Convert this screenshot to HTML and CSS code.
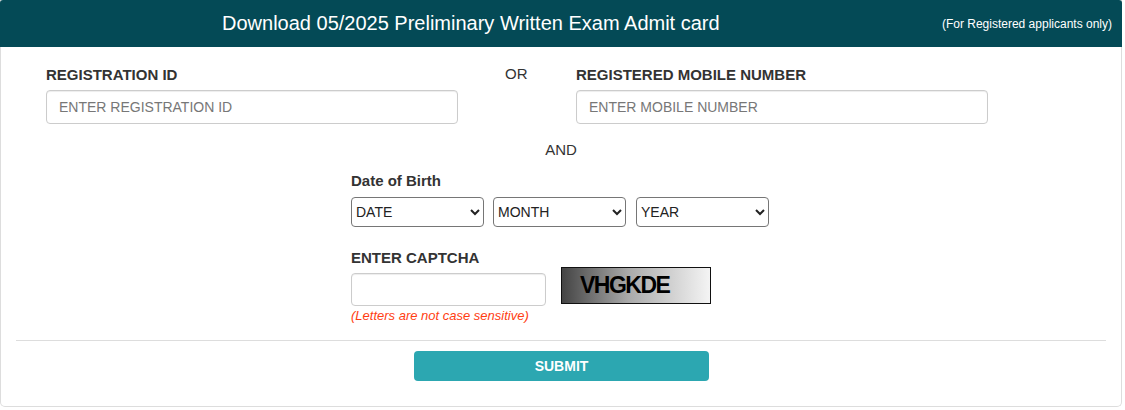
FILE: index.html
```html
<!DOCTYPE html>
<html>
<head>
<meta charset="utf-8">
<link rel="stylesheet" href="styles.css">
</head>
<body>
<div class="card">
  <div class="card-head">
    <div class="head-title">Download 05/2025 Preliminary Written Exam Admit card</div>
    <div class="head-note">(For Registered applicants only)</div>
  </div>
  <div class="card-body">
    <div class="id-row">
      <div class="field">
        <label class="lbl">REGISTRATION ID</label>
        <input class="txt" type="text" placeholder="ENTER REGISTRATION ID">
      </div>
      <div class="or">OR</div>
      <div class="field">
        <label class="lbl">REGISTERED MOBILE NUMBER</label>
        <input class="txt" type="text" placeholder="ENTER MOBILE NUMBER">
      </div>
    </div>
    <div class="and">AND</div>
    <div class="center-block">
      <label class="lbl lbl-dob">Date of Birth</label>
      <div class="dob-row">
        <select class="sel"><option>DATE</option></select>
        <select class="sel"><option>MONTH</option></select>
        <select class="sel"><option>YEAR</option></select>
      </div>
      <label class="lbl lbl-cap">ENTER CAPTCHA</label>
      <div class="cap-row">
        <div class="cap-col">
          <input class="txt cap-input" type="text">
          <div class="hint">(Letters are not case sensitive)</div>
        </div>
        <div class="cap-img"><span>VHGKDE</span></div>
      </div>
    </div>
    <hr class="rule">
    <div class="btn-row">
      <button class="submit">SUBMIT</button>
    </div>
  </div>
</div>
</body>
</html>
```

FILE: styles.css
```css
* { box-sizing: border-box; }
html, body { margin: 0; padding: 0; background: #fff; }
body {
  font-family: "Liberation Sans", Arial, sans-serif;
  font-size: 14px;
  color: #333;
  width: 1125px;
  height: 410px;
  overflow: hidden;
}
.card {
  width: 1122px;
  height: 407px;
  border: 1px solid #ddd;
  border-top: none;
  border-radius: 0 0 5px 5px;
}
.card-head {
  background: #044a56;
  color: #fff;
  height: 47px;
  margin: 0 -1px;
  display: flex;
  align-items: center;
  border-radius: 3px 3px 0 0;
}
.head-title {
  font-size: 20px;
  margin-left: 222px;
}
.head-note {
  font-size: 12px;
  margin-left: auto;
  margin-right: 10px;
}
.card-body {
  padding: 18px 15px 0 15px;
}
.id-row {
  display: flex;
  align-items: flex-start;
  padding-left: 30px;
}
.field { width: 412px; display: flex; flex-direction: column; }
.lbl {
  font-weight: bold;
  font-size: 15px;
  color: #333;
  display: block;
  line-height: 20px;
}
.id-row .lbl { margin-bottom: 5px; }
.or {
  width: 118px;
  padding-left: 47px;
  font-size: 15px;
  line-height: 18px;
}
.txt {
  height: 34px;
  border: 1px solid #ccc;
  border-radius: 4px;
  padding: 6px 12px;
  font-family: "Liberation Sans", Arial, sans-serif;
  font-size: 14px;
  color: #555;
  outline: none;
  box-shadow: inset 0 1px 1px rgba(0,0,0,.075);
  width: 100%;
}
.txt::placeholder { color: #777; }
.and {
  text-align: center;
  font-size: 15px;
  margin-top: 17px;
  line-height: 18px;
}
.center-block {
  margin-left: 335px;
  width: 460px;
  margin-top: 12px;
}
.lbl-dob { margin-bottom: 6px; }
.dob-row {
  display: flex;
}
.sel {
  flex: 0 0 133px;
  width: 133px;
  height: 30px;
  margin-right: 9px;
  border: 1px solid #767676;
  border-radius: 4px;
  background: #fff;
  font-family: "Liberation Sans", Arial, sans-serif;
  font-size: 14px;
  color: #222;
  padding: 0;
}
.sel:last-child { margin-left: 1px; }
.lbl-cap { margin-top: 21px; margin-bottom: 0; }
.cap-row {
  display: flex;
  gap: 15px;
}
.cap-col { display: flex; flex-direction: column; padding-top: 5px; }
.cap-input { width: 195px; height: 33px; }
.hint {
  color: #ff3d12;
  font-style: italic;
  font-size: 13px;
  line-height: 15px;
  margin-top: 2px;
}
.cap-img {
  width: 150px;
  height: 37px;
  margin-top: -1px;
  border: 1px solid #111;
  background: linear-gradient(to right, #444, #aaa 45%, #f4f4f4);
  display: flex;
  align-items: center;
  padding-left: 18px;
}
.cap-img span {
  font-weight: bold;
  font-size: 23px;
  color: #000;
  letter-spacing: -1.5px;
}
.rule {
  border: none;
  border-top: 1px solid #ddd;
  margin: 17px 0 0 0;
}
.btn-row {
  display: flex;
  margin-top: 10px;
  padding-left: 398px;
}
.submit {
  width: 295px;
  height: 30px;
  background: #2ca7b1;
  color: #fff;
  border: none;
  border-radius: 4px;
  font-family: "Liberation Sans", Arial, sans-serif;
  font-weight: bold;
  font-size: 14px;
}
```
